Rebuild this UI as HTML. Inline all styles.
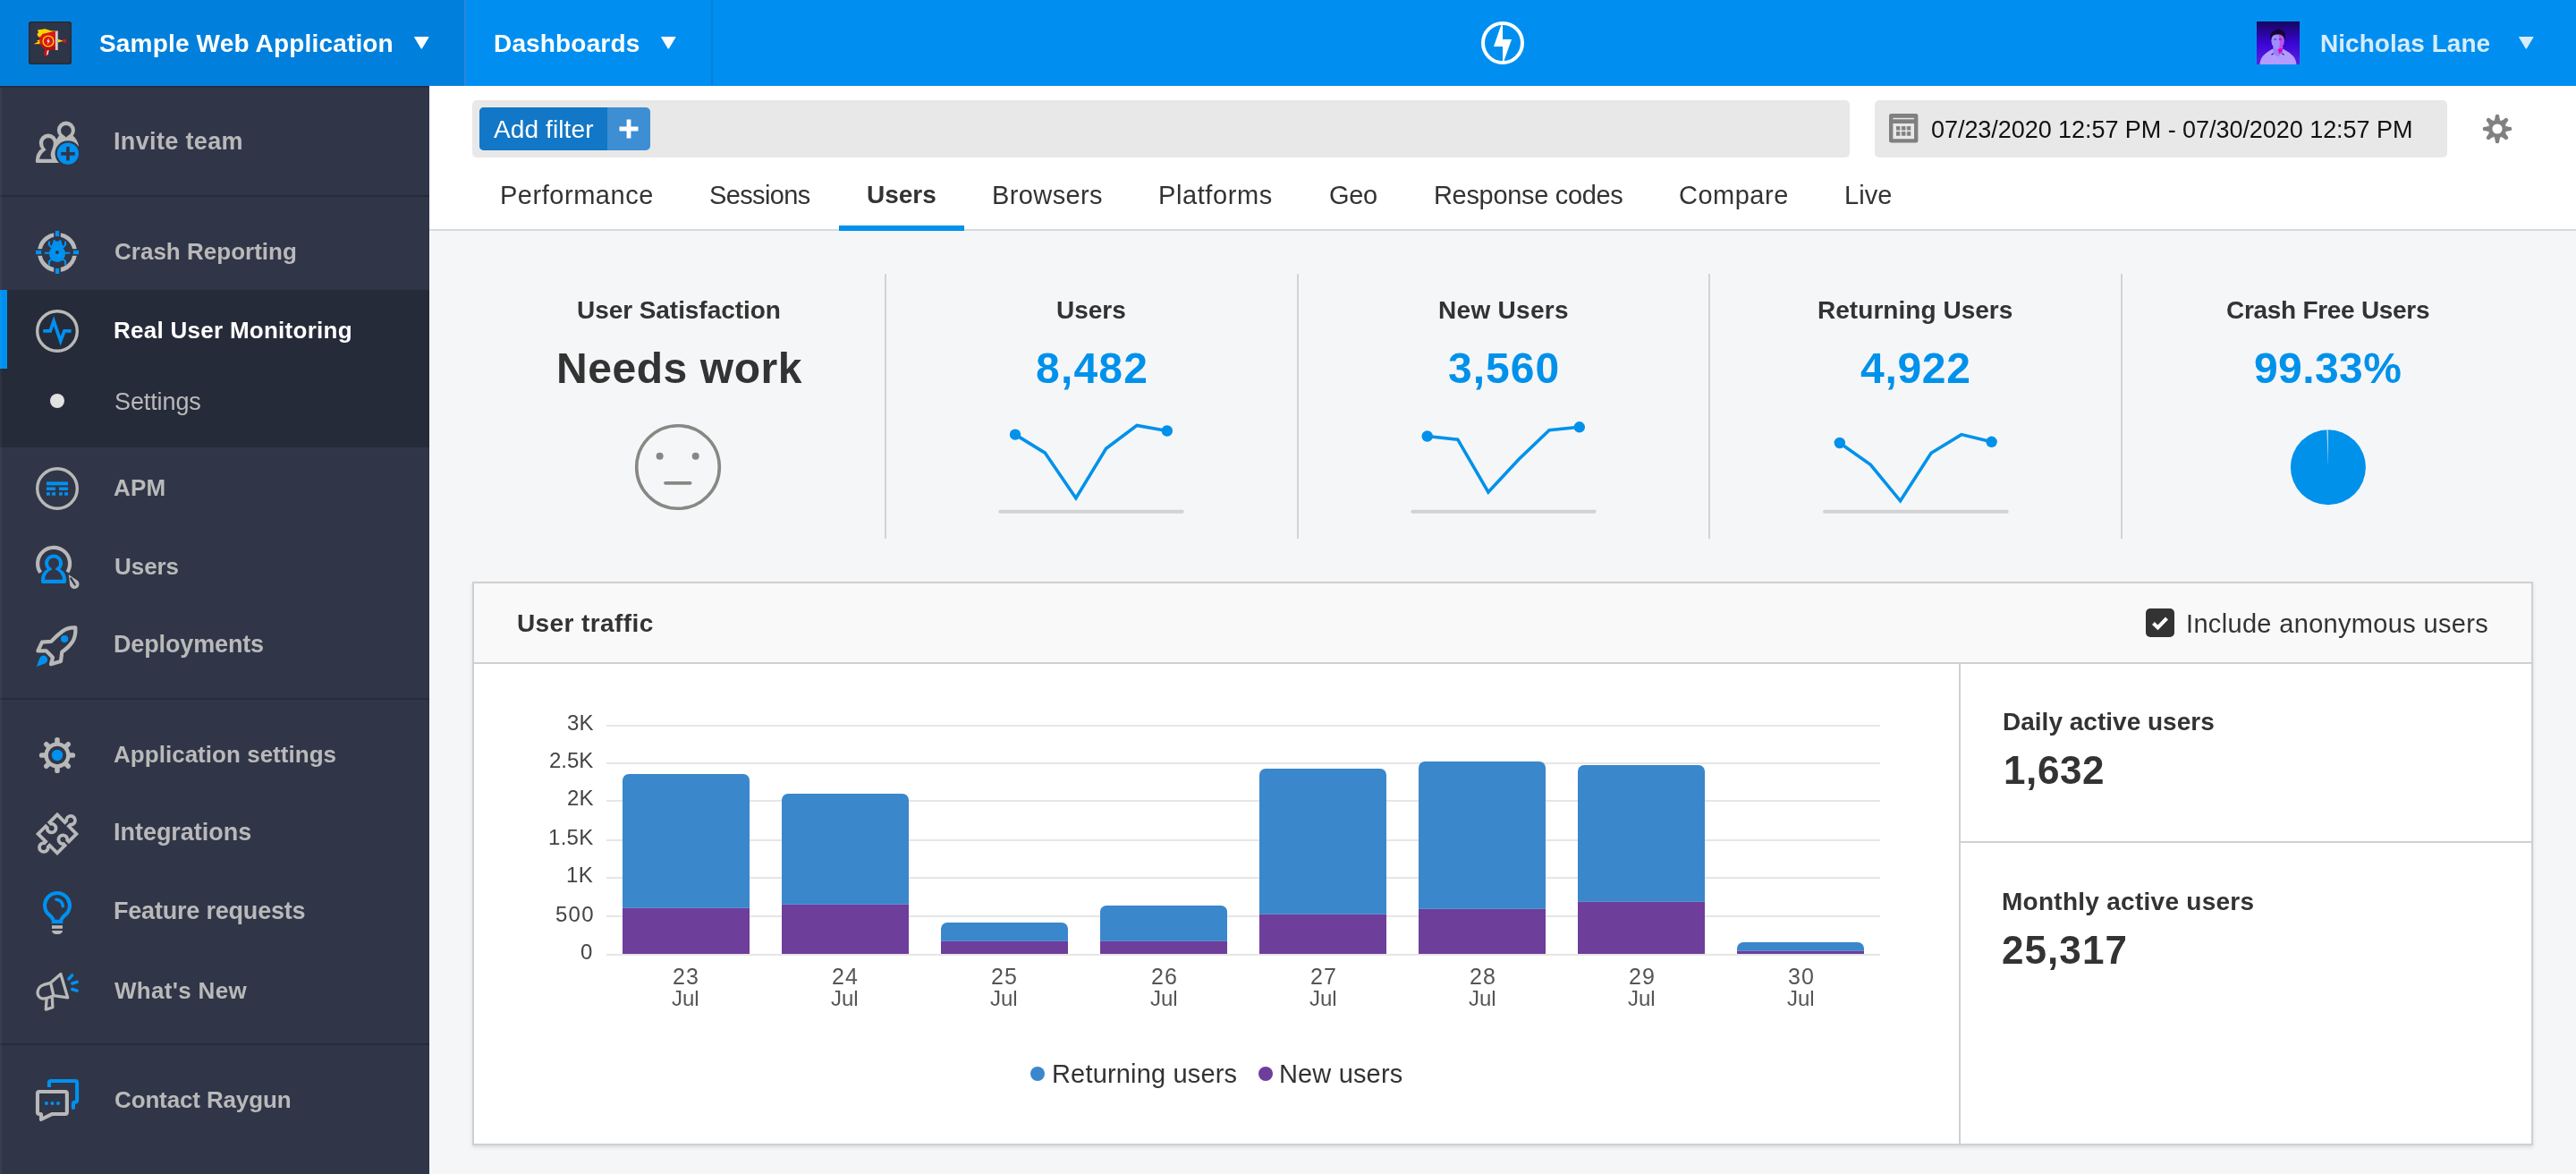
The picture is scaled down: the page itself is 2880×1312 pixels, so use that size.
<!DOCTYPE html>
<html><head><meta charset="utf-8"><title>Raygun - Users</title>
<style>
html,body{margin:0;padding:0}
body{width:2880px;height:1312px;position:relative;overflow:hidden;background:#f5f6f8;font-family:'Liberation Sans',sans-serif}
.t{position:absolute;white-space:nowrap;line-height:1;font-family:'Liberation Sans',sans-serif;will-change:transform}
.a{position:absolute}
svg{position:absolute;overflow:visible}
</style></head><body>
<!-- main white toolbar/tab area -->
<div class="a" style="left:480px;top:96px;width:2400px;height:160px;background:#fff"></div>
<div class="a" style="left:480px;top:256px;width:2400px;height:2px;background:#d9dadc"></div>
<!-- filter bar -->
<div class="a" style="left:528px;top:112px;width:1540px;height:64px;background:#e8e8e8;border-radius:5px"></div>
<div class="a" style="left:536px;top:120px;width:191px;height:48px;background:#3d8ed3;border-radius:5px;overflow:hidden"><div class="a" style="left:0;top:0;width:142.5px;height:48px;background:#1277c6"></div></div>
<svg style="left:692px;top:133px" width="22" height="22" viewBox="0 0 22 22"><path d="M11 .5v21M.5 11h21" stroke="#fff" stroke-width="4.8" fill="none"/></svg>
<!-- date box -->
<div class="a" style="left:2096px;top:112px;width:640px;height:64px;background:#e8e8e8;border-radius:5px"></div>
<!-- active tab underline -->
<div class="a" style="left:938px;top:252px;width:140px;height:6px;background:#0091ea"></div>
<!-- tile dividers -->
<div class="a" style="left:989px;top:306px;width:2px;height:296px;background:#d2d3d5"></div>
<div class="a" style="left:1450px;top:306px;width:2px;height:296px;background:#d2d3d5"></div>
<div class="a" style="left:1909.6px;top:306px;width:2px;height:296px;background:#d2d3d5"></div>
<div class="a" style="left:2371px;top:306px;width:2px;height:296px;background:#d2d3d5"></div>
<!-- panel -->
<div class="a" style="left:528px;top:650px;width:2304px;height:630px;box-sizing:border-box;border:2px solid #d0d0d0;background:#fff;box-shadow:0 2px 4px rgba(0,0,0,.12)"></div>
<div class="a" style="left:530px;top:652px;width:2300px;height:88px;background:#f9f9f9"></div>
<div class="a" style="left:530px;top:740px;width:2300px;height:2px;background:#d0d0d0"></div>
<div class="a" style="left:2190px;top:742px;width:2px;height:536px;background:#d0d0d0"></div>
<div class="a" style="left:2192px;top:940px;width:638px;height:2px;background:#d0d0d0"></div>
<!-- checkbox -->
<div class="a" style="left:2398.5px;top:680px;width:32px;height:32px;background:#333;border-radius:5px"></div>
<svg style="left:2398.5px;top:680px" width="32" height="32" viewBox="0 0 32 32"><path d="M8.5 16.5l5 5 10-10.5" stroke="#fff" stroke-width="4" fill="none"/></svg>
<!-- legend dots -->
<div class="a" style="left:1151.8px;top:1192.4px;width:16px;height:16px;border-radius:50%;background:#3a87cb"></div>
<div class="a" style="left:1406.8px;top:1192.4px;width:16px;height:16px;border-radius:50%;background:#6e3e9b"></div>

<div style="position:absolute;left:677.8px;top:809.7px;width:1424.2px;height:2px;background:#e6e6e6"></div>
<div style="position:absolute;left:677.8px;top:851.7px;width:1424.2px;height:2px;background:#e6e6e6"></div>
<div style="position:absolute;left:677.8px;top:893.9px;width:1424.2px;height:2px;background:#e6e6e6"></div>
<div style="position:absolute;left:677.8px;top:937.6px;width:1424.2px;height:2px;background:#e6e6e6"></div>
<div style="position:absolute;left:677.8px;top:979.6px;width:1424.2px;height:2px;background:#e6e6e6"></div>
<div style="position:absolute;left:677.8px;top:1023.2px;width:1424.2px;height:2px;background:#e6e6e6"></div>
<div style="position:absolute;left:677.8px;top:1065.6px;width:1424.2px;height:2px;background:#e6e6e6"></div>
<div style="position:absolute;left:695.7px;top:865.4px;width:142.2px;height:200.4px;background:#3a87cb;border-radius:7px 7px 0 0;overflow:hidden"><div style="position:absolute;left:0;right:0;top:149.0px;bottom:0;background:#6e3e9b;border-top:1px solid #5f8fd0"></div></div>
<div style="position:absolute;left:873.8px;top:887.0px;width:142.2px;height:178.8px;background:#3a87cb;border-radius:7px 7px 0 0;overflow:hidden"><div style="position:absolute;left:0;right:0;top:122.6px;bottom:0;background:#6e3e9b;border-top:1px solid #5f8fd0"></div></div>
<div style="position:absolute;left:1051.8px;top:1031.0px;width:142.2px;height:34.8px;background:#3a87cb;border-radius:7px 7px 0 0;overflow:hidden"><div style="position:absolute;left:0;right:0;top:20.4px;bottom:0;background:#6e3e9b;border-top:1px solid #5f8fd0"></div></div>
<div style="position:absolute;left:1229.9px;top:1012.1px;width:142.2px;height:53.7px;background:#3a87cb;border-radius:7px 7px 0 0;overflow:hidden"><div style="position:absolute;left:0;right:0;top:38.5px;bottom:0;background:#6e3e9b;border-top:1px solid #5f8fd0"></div></div>
<div style="position:absolute;left:1407.9px;top:858.9px;width:142.2px;height:206.9px;background:#3a87cb;border-radius:7px 7px 0 0;overflow:hidden"><div style="position:absolute;left:0;right:0;top:161.8px;bottom:0;background:#6e3e9b;border-top:1px solid #5f8fd0"></div></div>
<div style="position:absolute;left:1586.0px;top:851.2px;width:142.2px;height:214.6px;background:#3a87cb;border-radius:7px 7px 0 0;overflow:hidden"><div style="position:absolute;left:0;right:0;top:164.3px;bottom:0;background:#6e3e9b;border-top:1px solid #5f8fd0"></div></div>
<div style="position:absolute;left:1764.0px;top:854.9px;width:142.2px;height:210.9px;background:#3a87cb;border-radius:7px 7px 0 0;overflow:hidden"><div style="position:absolute;left:0;right:0;top:152.6px;bottom:0;background:#6e3e9b;border-top:1px solid #5f8fd0"></div></div>
<div style="position:absolute;left:1942.1px;top:1053.1px;width:142.2px;height:12.7px;background:#3a87cb;border-radius:7px 7px 0 0;overflow:hidden"><div style="position:absolute;left:0;right:0;top:8.9px;bottom:0;background:#6e3e9b;border-top:1px solid #5f8fd0"></div></div>
<div class="a" style="left:0;top:96px;width:480px;height:1216px;background:#303648"></div>
<div class="a" style="left:0;top:96px;width:480px;height:3px;background:linear-gradient(#232838,#303648)"></div>
<div class="a" style="left:0;top:324px;width:480px;height:176px;background:#262b3a"></div>
<div class="a" style="left:0;top:324px;width:8px;height:88px;background:#0091f0"></div>
<div class="a" style="left:0;top:218px;width:480px;height:2px;background:#272c3b"></div>
<div class="a" style="left:0;top:780px;width:480px;height:2px;background:#272c3b"></div>
<div class="a" style="left:0;top:1166px;width:480px;height:2px;background:#272c3b"></div>
<div class="a" style="left:56px;top:440px;width:16px;height:16px;border-radius:50%;background:#e2e2e2"></div>
<div class="a" style="left:0;top:98px;width:1.5px;height:1214px;background:rgba(255,255,255,.04)"></div>

<div class="a" style="left:0;top:0;width:2880px;height:96px;background:#008ff0"></div>
<div class="a" style="left:0;top:0;width:520px;height:96px;background:#0080dc"></div>
<div class="a" style="left:519px;top:0;width:1.5px;height:96px;background:#2f86dc"></div>
<div class="a" style="left:795px;top:0;width:1.5px;height:96px;background:#0a80d8"></div>
<!-- dropdown arrows -->
<svg style="left:463.3px;top:41.3px" width="16.6" height="14" viewBox="0 0 16.6 14"><path d="M.6 0h15.4q.9 0 .4.8l-7.5 12.4q-.6.8-1.200 0L.2 .8q-.5-.8.4-.8z" fill="#fff"/></svg>
<svg style="left:739px;top:41.3px" width="16.6" height="14" viewBox="0 0 16.6 14"><path d="M.6 0h15.4q.9 0 .4.8l-7.5 12.4q-.6.8-1.200 0L.2 .8q-.5-.8.4-.8z" fill="#fff"/></svg>
<svg style="left:2815.6px;top:41.3px" width="16.6" height="14" viewBox="0 0 16.6 14"><path d="M.6 0h15.4q.9 0 .4.8l-7.5 12.4q-.6.8-1.200 0L.2 .8q-.5-.8.4-.8z" fill="#d6ecfc"/></svg>

<svg style="left:32px;top:24px" width="48" height="48" viewBox="0 0 48 48"><rect x="0" y="0" width="48" height="48" rx="3" fill="#2e3546"/><rect x=".75" y=".75" width="46.5" height="46.5" rx="2.5" fill="none" stroke="#262b39" stroke-width="1.5"/>
<path d="M10 9.5L18.4 8.2 25.5 10.5 30 10.6V14L16.5 17 11.2 17.5 9.3 14.2 11 12.5z" fill="#ffd500"/>
<path d="M5.5 25.2L11 22.6 9 21.5 15.5 19.5 16 25z" fill="#ffd500"/>
<path d="M12 18.5L15.5 14 30 10.6V31.7L20.6 32.2 15.5 29 12.5 25z" fill="#d9181c"/>
<path d="M13 25L30 28V31.7L20.6 32.2 15.5 29z" fill="#b30f12"/>
<path d="M18.2 31L16.8 37.5 19.8 39.6 21.8 36.5 22.6 32z" fill="#c41216"/>
<path d="M20.8 32.5L20 38 21.8 36.5 22.6 32z" fill="#f0e6e6"/>
<rect x="30" y="10.6" width="2.9" height="21.4" fill="#d8d8dc"/><rect x="31.6" y="10.6" width="1.3" height="21.4" fill="#a9a9b2"/>
<path d="M32.9 19.8L39 21.8 32.9 23.6z" fill="#ffd500"/><circle cx="40.1" cy="21.7" r="2" fill="#d9181c"/>
<circle cx="22" cy="22" r="5.9" fill="#d9181c" stroke="#ffd000" stroke-width="1.4"/>
<path d="M22.8 18.2L20.3 22.6H21.9L21 26L23.8 21.4H22.1z" fill="#fff"/></svg>
<svg style="left:1656px;top:24px" width="48" height="48" viewBox="0 0 48 48"><circle cx="24" cy="24" r="22" fill="none" stroke="#fff" stroke-width="4"/>
<path d="M22.2 4.2H24V28.1H14z" fill="#fff"/><path d="M24 20.1H34L25.5 44H24z" fill="#fff"/></svg>
<svg style="left:2523px;top:24px" width="48" height="48" viewBox="0 0 48 48"><defs><linearGradient id="avg" x1="0" y1="0" x2="0" y2="1"><stop offset="0" stop-color="#16075e"/><stop offset=".5" stop-color="#3a04d2"/><stop offset="1" stop-color="#5a22e2"/></linearGradient><clipPath id="avc"><rect width="48" height="48"/></clipPath></defs>
<rect width="48" height="48" fill="url(#avg)"/><g clip-path="url(#avc)">
<path d="M3.5 48C4 40 8 36.5 17 31L30 31C40 36.5 43.5 40 44.5 48z" fill="#b49bff"/>
<path d="M18 29H29.5L28 36 23.5 39.5 19 36z" fill="#9a80f5"/>
<path d="M23.5 30L29 30 28.5 34 25 36z" fill="#e000c0"/>
<ellipse cx="23.6" cy="21.5" rx="7.2" ry="9.6" fill="#9f8cff"/>
<path d="M24 14C27 14 30 16 30.6 22 30.5 27 28 30.5 24.5 31 26.5 27 26 20 24 14z" fill="#d428d8" opacity=".6"/><ellipse cx="20.7" cy="20" rx="1.5" ry="1" fill="#2a1a80" opacity=".55"/><ellipse cx="26.2" cy="20" rx="1.5" ry="1" fill="#2a1a80" opacity=".55"/><path d="M16.5 37.2L19 35.6M30.6 37.2L28.2 35.6" stroke="#1a0a70" stroke-width="1.1"/>
<path d="M15.2 21C14 15 16.5 11 20.5 10.5 22 7.5 26 7.5 28 10 31.5 10.5 33 15 31.2 21 30.5 16.5 28 14.2 23.5 14.5 19 14.2 16.5 16.5 15.2 21z" fill="#15062f"/>
</g></svg>
<svg style="left:40px;top:136px" width="48" height="48" viewBox="0 0 48 48"><g fill="#b8b8b8"><circle cx="33.9" cy="9.6" r="10"/><path d="M26 15.5C22 21 17.5 30 18 46.1H36V35.6H48V27C47 22 45 18.5 41.2 15.2z"/>
<circle cx="13.9" cy="23.7" r="10.1"/><path d="M6.8 30C2 33 -.1 38 -.1 44.6Q-.1 46.1 1.4 46.1H25V28z"/></g>
<g fill="#303648"><circle cx="33.9" cy="9.9" r="5.9"/><path d="M28.6 12.4L33.9 17.4 39.2 12.4z"/>
<path d="M19.8 24.1C19.8 16.2 8.2 16.6 8.2 24.1 8.2 27.5 9.6 29.6 11.6 31.3 10.6 32.6 7.2 34.6 5.75 37.4 4.6 39.4 4 41.8 4 41.8H17.8C16.4 38.5 16.4 35.5 17.5 32.8 18.4 30 19.8 27.5 19.8 24.1z"/>
<circle cx="35.9" cy="35.6" r="14.4"/></g>
<circle cx="35.9" cy="35.6" r="12.1" fill="#0091f0"/><path d="M35.95 28.1v15.5M28.2 35.85h15.6" stroke="#303648" stroke-width="3.6" fill="none"/></svg>
<svg style="left:40px;top:258px" width="48" height="48" viewBox="0 0 48 48"><circle cx="24" cy="24" r="19.8" fill="none" stroke="#b8b8b8" stroke-width="4.6"/><g transform="rotate(0 24 24)"><rect x="20.2" y="0" width="7.6" height="8" fill="#303648"/><rect x="21.85" y="0" width="4.3" height="6.1" fill="#0091f0"/></g><g transform="rotate(90 24 24)"><rect x="20.2" y="0" width="7.6" height="8" fill="#303648"/><rect x="21.85" y="0" width="4.3" height="6.1" fill="#0091f0"/></g><g transform="rotate(180 24 24)"><rect x="20.2" y="0" width="7.6" height="8" fill="#303648"/><rect x="21.85" y="0" width="4.3" height="6.1" fill="#0091f0"/></g><g transform="rotate(270 24 24)"><rect x="20.2" y="0" width="7.6" height="8" fill="#303648"/><rect x="21.85" y="0" width="4.3" height="6.1" fill="#0091f0"/></g><g fill="#0091f0"><ellipse cx="24" cy="25.6" rx="9.1" ry="9.4"/><ellipse cx="24" cy="17.6" rx="6.4" ry="6.2"/><rect x="19.3" y="10.2" width="3" height="4" rx="1.2"/><rect x="25.7" y="10.2" width="3" height="4" rx="1.2"/></g>
<g stroke="#0091f0" stroke-width="2.1" fill="none" stroke-linecap="round" stroke-linejoin="round"><path d="M17.4 18.2L14.95 15.6V12.6M30.6 18.2L33.05 15.6V12.6M16 24.7H10.6M32 24.7H37.4M17.4 31.6L14.95 34.3V37.4M30.6 31.6L33.05 34.3V37.4"/></g>
<circle cx="23.9" cy="23.9" r="2" fill="#303648"/></svg>
<svg style="left:40px;top:346px" width="48" height="48" viewBox="0 0 48 48"><circle cx="24" cy="24" r="22.3" fill="none" stroke="#b8b8b8" stroke-width="3.4"/><path d="M8.3 23.9H16.2L20.1 12.6 27.7 35 32 23.9H39.6" fill="none" stroke="#0091f0" stroke-width="3.7" stroke-linejoin="miter"/></svg>
<svg style="left:40px;top:522px" width="48" height="48" viewBox="0 0 48 48"><circle cx="24" cy="24" r="22.3" fill="none" stroke="#b8b8b8" stroke-width="3.4"/><g fill="#0091f0"><rect x="12" y="16.4" width="24" height="3.9"/><rect x="12" y="22.5" width="10" height="3.4"/><rect x="26" y="22.5" width="10" height="3.4"/><rect x="12" y="28.2" width="3.9" height="3.5"/><rect x="18.1" y="28.2" width="3.9" height="3.5"/><rect x="26" y="28.2" width="3.9" height="3.5"/><rect x="32.1" y="28.2" width="3.9" height="3.5"/></g></svg>
<svg style="left:40px;top:610px" width="48" height="48" viewBox="0 0 48 48"><path d="M5.2 29.9A18 18 0 1 1 35.4 29.3" fill="none" stroke="#b8b8b8" stroke-width="4.2"/>
<path d="M36.8 32.2L46.2 38.5A5.2 5.2 0 1 1 38.1 43.4z" fill="#b8b8b8"/><path d="M39.2 36.4L43.8 43.3" stroke="#303648" stroke-width="2.3" stroke-linecap="round"/>
<g fill="#0091f0"><circle cx="20.05" cy="19.5" r="10.05"/><path d="M11.9 26.5C8 29 6 33 6 38V40Q6 42 8 42H32.1Q34.1 42 34.1 40V38C34.1 33 32 29 28.2 26.5z"/></g>
<g fill="#303648"><circle cx="20.05" cy="19.5" r="6"/><path d="M17.6 24.5L18 26.7C13 28.5 10.1 33 10.1 37.8H29.9C29.9 33 27 28.5 22.1 26.7L22.5 24.5z"/></g></svg>
<svg style="left:40px;top:698px" width="48" height="48" viewBox="0 0 48 48"><path d="M44.3 3.45Q36 3 29.8 7.5 23 12.5 17.25 18.8L7 19.55 2.4 29.3H11.6L19 36.7 17 44.3 28 41 29.3 30.5Q37 25.5 41.5 18.5 45 11.5 44.3 3.45z" fill="none" stroke="#b8b8b8" stroke-width="4.2" stroke-linejoin="round"/>
<circle cx="32.1" cy="16" r="4.1" fill="#0091f0"/><path d="M.9 47.1L4.28 37.66A4.6 4.6 0 1 1 10.26 43.49z" fill="#0091f0"/></svg>
<svg style="left:40px;top:820px" width="48" height="48" viewBox="0 0 48 48"><rect x="21.2" y="3.9" width="5.6" height="9" rx="2.6" fill="#b8b8b8" transform="rotate(0 24 24)"/><rect x="21.2" y="3.9" width="5.6" height="9" rx="2.6" fill="#b8b8b8" transform="rotate(45 24 24)"/><rect x="21.2" y="3.9" width="5.6" height="9" rx="2.6" fill="#b8b8b8" transform="rotate(90 24 24)"/><rect x="21.2" y="3.9" width="5.6" height="9" rx="2.6" fill="#b8b8b8" transform="rotate(135 24 24)"/><rect x="21.2" y="3.9" width="5.6" height="9" rx="2.6" fill="#b8b8b8" transform="rotate(180 24 24)"/><rect x="21.2" y="3.9" width="5.6" height="9" rx="2.6" fill="#b8b8b8" transform="rotate(225 24 24)"/><rect x="21.2" y="3.9" width="5.6" height="9" rx="2.6" fill="#b8b8b8" transform="rotate(270 24 24)"/><rect x="21.2" y="3.9" width="5.6" height="9" rx="2.6" fill="#b8b8b8" transform="rotate(315 24 24)"/><circle cx="24" cy="24" r="12.4" fill="none" stroke="#b8b8b8" stroke-width="4.4"/><circle cx="24" cy="24" r="6.2" fill="#0091f0"/></svg>
<svg style="left:40px;top:908px" width="48" height="48" viewBox="0 0 48 48"><g transform="translate(24 23.9) rotate(45)"><path d="M-15.17 -15.17L-3.00 -15.17L-3.00 -17.50A4.9 4.9 0 1 1 3.00 -17.50L3.00 -15.17L15.17 -15.17L15.17 -3.00L12.84 -3.00A4.9 4.9 0 1 0 12.84 3.00L15.17 3.00L15.17 15.17L3.00 15.17L3.00 17.50A4.9 4.9 0 1 1 -3.00 17.50L-3.00 15.17L-15.17 15.17L-15.17 3.00L-12.84 3.00A4.9 4.9 0 1 0 -12.84 -3.00L-15.17 -3.00Z" fill="none" stroke="#b8b8b8" stroke-width="3.75" stroke-linejoin="miter"/></g></svg>
<svg style="left:40px;top:996px" width="48" height="48" viewBox="0 0 48 48"><path d="M19.8 33.85C19.8 29 15.5 27.5 12.57 23.9A13.95 13.95 0 1 1 35.43 23.9C32.5 27.5 28.2 29 28.2 33.85z" fill="none" stroke="#0091f0" stroke-width="4.1" stroke-linejoin="miter"/>
<path d="M22.9 9.3A7.4 7.4 0 0 1 30.3 16.7" fill="none" stroke="#0091f0" stroke-width="3.6" stroke-linecap="round"/>
<g fill="#b8b8b8"><rect x="18" y="38.2" width="12" height="3.6"/><path d="M18 44.1H30C30 46.4 28 47.9 26 47.9H22C20 47.9 18 46.4 18 44.1z"/></g></svg>
<svg style="left:40px;top:1084px" width="48" height="48" viewBox="0 0 48 48"><g fill="none" stroke="#b8b8b8" stroke-width="3.3" stroke-linejoin="round"><path d="M16.6 14.3L27.9 4.6 35.7 30.9 19.9 28.7z"/>
<path d="M16.6 14.3L8.5 16.7C1.5 19 .2 27.6 4.8 31 7.6 33 10.4 32.4 19.9 28.7"/><path d="M12.1 32.5L11.3 44.2 18.9 41.7 18.3 30.6"/></g>
<g stroke="#0091f0" stroke-width="3.5" stroke-linecap="round"><path d="M36.9 10L40.6 5.8M40.8 15L46.1 13.4M40.8 21.5L46.1 23.1"/></g></svg>
<svg style="left:40px;top:1205px" width="48" height="48" viewBox="0 0 48 48"><path d="M14.95 10.1V5Q14.95 2.95 17 2.95H44Q46.1 2.95 46.1 5V24.6Q46.1 26.7 44 26.7H43.7Q41.9 26.7 41.9 28.5V32.9" fill="none" stroke="#0091f0" stroke-width="4.1" stroke-linejoin="round"/><circle cx="41.9" cy="32.9" r="2.05" fill="#0091f0"/>
<path d="M1.95 17Q1.95 14.95 4 14.95H32.8Q34.85 14.95 34.85 17V37.9Q34.85 39.95 32.8 39.95H18.5L6 46V40.6Q6 39.95 5.2 39.95H4Q1.95 39.95 1.95 37.9z" fill="none" stroke="#b8b8b8" stroke-width="4.1" stroke-linejoin="round"/>
<circle cx="11.9" cy="28" r="2.05" fill="#0091f0"/><circle cx="18.45" cy="28" r="2.05" fill="#0091f0"/><circle cx="25" cy="28" r="2.05" fill="#0091f0"/></svg>
<svg style="left:2111.8px;top:127.2px" width="33" height="33" viewBox="0 0 33 33"><rect x="0" y="0" width="32.4" height="32.6" rx="2.5" fill="#808080"/><rect x="4.4" y="4.8" width="23.6" height="1.5" fill="#e8e8e8"/><rect x="4.4" y="11" width="23.6" height="17.2" fill="#e8e8e8"/>
<rect x="8" y="14.2" width="16.2" height="4.3" fill="#cfcfcf"/><rect x="8" y="20.2" width="16.2" height="4.4" fill="#cfcfcf"/>
<g fill="#808080"><rect x="8" y="14.1" width="4" height="4.4"/><rect x="14.2" y="14.1" width="4" height="4.4"/><rect x="20.2" y="14.1" width="4" height="4.4"/><rect x="8" y="20.1" width="4" height="4.6"/><rect x="14.2" y="20.1" width="4" height="4.6"/><rect x="20.2" y="20.1" width="4" height="4.6"/></g></svg>
<svg style="left:2792px;top:143.7px" width="1" height="1" viewBox="0 0 1 1"><g><path d="M-3.6 -9.3C-2.6 -11 -2.4 -12.5 -2.3 -14A2.3 2.3 0 0 1 2.3 -14C2.4 -12.5 2.6 -11 3.6 -9.3z" fill="#808080" transform="rotate(0)"/><path d="M-3.6 -9.3C-2.6 -11 -2.4 -12.5 -2.3 -14A2.3 2.3 0 0 1 2.3 -14C2.4 -12.5 2.6 -11 3.6 -9.3z" fill="#808080" transform="rotate(45)"/><path d="M-3.6 -9.3C-2.6 -11 -2.4 -12.5 -2.3 -14A2.3 2.3 0 0 1 2.3 -14C2.4 -12.5 2.6 -11 3.6 -9.3z" fill="#808080" transform="rotate(90)"/><path d="M-3.6 -9.3C-2.6 -11 -2.4 -12.5 -2.3 -14A2.3 2.3 0 0 1 2.3 -14C2.4 -12.5 2.6 -11 3.6 -9.3z" fill="#808080" transform="rotate(135)"/><path d="M-3.6 -9.3C-2.6 -11 -2.4 -12.5 -2.3 -14A2.3 2.3 0 0 1 2.3 -14C2.4 -12.5 2.6 -11 3.6 -9.3z" fill="#808080" transform="rotate(180)"/><path d="M-3.6 -9.3C-2.6 -11 -2.4 -12.5 -2.3 -14A2.3 2.3 0 0 1 2.3 -14C2.4 -12.5 2.6 -11 3.6 -9.3z" fill="#808080" transform="rotate(225)"/><path d="M-3.6 -9.3C-2.6 -11 -2.4 -12.5 -2.3 -14A2.3 2.3 0 0 1 2.3 -14C2.4 -12.5 2.6 -11 3.6 -9.3z" fill="#808080" transform="rotate(270)"/><path d="M-3.6 -9.3C-2.6 -11 -2.4 -12.5 -2.3 -14A2.3 2.3 0 0 1 2.3 -14C2.4 -12.5 2.6 -11 3.6 -9.3z" fill="#808080" transform="rotate(315)"/><circle r="7.8" fill="none" stroke="#808080" stroke-width="4.4"/></g></svg>
<svg style="left:708px;top:472px" width="100" height="100" viewBox="0 0 100 100"><circle cx="50" cy="50" r="46.3" fill="none" stroke="#888784" stroke-width="3.6"/><circle cx="29.6" cy="37.7" r="4" fill="#888784"/><circle cx="69.7" cy="37.7" r="4" fill="#888784"/><path d="M36 67.8H63.6" stroke="#888784" stroke-width="3.8" stroke-linecap="round"/></svg>
<svg style="left:0;top:0" width="2880" height="1312" viewBox="0 0 2880 1312"><path d="M1118.3 571.8H1321.6" stroke="#d2d2d2" stroke-width="4" stroke-linecap="round"/><polyline points="1135.0,485.6 1168.4,506.2 1202.9,556.8 1236.6,501.3 1271.0,475.5 1304.8,481.5" fill="none" stroke="#0091ea" stroke-width="3.6" stroke-linejoin="miter"/><circle cx="1135.0" cy="485.6" r="6.2" fill="#0091ea"/><circle cx="1304.8" cy="481.5" r="6.2" fill="#0091ea"/><path d="M1579.3 571.8H1782.6" stroke="#d2d2d2" stroke-width="4" stroke-linecap="round"/><polyline points="1595.7,487.5 1629.8,491.2 1663.9,550.0 1697.6,513.7 1732.1,480.7 1765.8,477.3" fill="none" stroke="#0091ea" stroke-width="3.6" stroke-linejoin="miter"/><circle cx="1595.7" cy="487.5" r="6.2" fill="#0091ea"/><circle cx="1765.8" cy="477.3" r="6.2" fill="#0091ea"/><path d="M2040 571.8H2243.7" stroke="#d2d2d2" stroke-width="4" stroke-linecap="round"/><polyline points="2056.8,495.0 2091.3,519.3 2124.6,559.8 2159.1,506.2 2192.9,485.6 2226.6,493.8" fill="none" stroke="#0091ea" stroke-width="3.6" stroke-linejoin="miter"/><circle cx="2056.8" cy="495.0" r="6.2" fill="#0091ea"/><circle cx="2226.6" cy="493.8" r="6.2" fill="#0091ea"/><circle cx="2602.9" cy="522.2" r="42" fill="#0091ea"/><path d="M2602.9 522.2L2601.4 480.2H2602.9z" fill="#bfe0f7"/></svg>
<div class="t" style="left:111.4px;top:35.3px;font-size:28px;font-weight:700;color:#fff;letter-spacing:0.17px;">Sample Web Application</div>
<div class="t" style="left:551.6px;top:35.3px;font-size:28px;font-weight:700;color:#fff;letter-spacing:0.16px;">Dashboards</div>
<div class="t" style="left:2593.8px;top:35.3px;font-size:28px;font-weight:700;color:#d6ecfc;letter-spacing:0.02px;">Nicholas Lane</div>
<div class="t" style="left:127.3px;top:145.1px;font-size:27px;font-weight:700;color:#b9b9b9;letter-spacing:0.35px;">Invite team</div>
<div class="t" style="left:127.6px;top:268.0px;font-size:26px;font-weight:700;color:#b9b9b9;letter-spacing:0.01px;">Crash Reporting</div>
<div class="t" style="left:127.3px;top:356.0px;font-size:26px;font-weight:700;color:#fff;letter-spacing:0.27px;">Real User Monitoring</div>
<div class="t" style="left:127.6px;top:435.7px;font-size:27px;font-weight:400;color:#b9b9b9;letter-spacing:-0.11px;">Settings</div>
<div class="t" style="left:127.2px;top:532.4px;font-size:26px;font-weight:700;color:#b9b9b9;letter-spacing:0.25px;">APM</div>
<div class="t" style="left:127.5px;top:620.0px;font-size:26px;font-weight:700;color:#b9b9b9;letter-spacing:-0.05px;">Users</div>
<div class="t" style="left:127.3px;top:707.1px;font-size:27px;font-weight:700;color:#b9b9b9;letter-spacing:-0.14px;">Deployments</div>
<div class="t" style="left:127.2px;top:830.0px;font-size:26px;font-weight:700;color:#b9b9b9;letter-spacing:0.03px;">Application settings</div>
<div class="t" style="left:127.3px;top:917.1px;font-size:27px;font-weight:700;color:#b9b9b9;letter-spacing:-0.03px;">Integrations</div>
<div class="t" style="left:127.3px;top:1005.1px;font-size:27px;font-weight:700;color:#b9b9b9;letter-spacing:-0.20px;">Feature requests</div>
<div class="t" style="left:128.4px;top:1094.0px;font-size:26px;font-weight:700;color:#b9b9b9;letter-spacing:0.31px;">What's New</div>
<div class="t" style="left:127.6px;top:1216.0px;font-size:26px;font-weight:700;color:#b9b9b9;letter-spacing:-0.14px;">Contact Raygun</div>
<div class="t" style="left:551.7px;top:130.8px;font-size:28px;font-weight:400;color:#fff;letter-spacing:0.11px;">Add filter</div>
<div class="t" style="left:2159.0px;top:132.0px;font-size:27px;font-weight:400;color:#111;letter-spacing:-0.05px;">07/23/2020 12:57 PM - 07/30/2020 12:57 PM</div>
<div class="t" style="left:558.7px;top:203.5px;font-size:29px;font-weight:400;color:#333;letter-spacing:0.53px;">Performance</div>
<div class="t" style="left:793.0px;top:203.5px;font-size:29px;font-weight:400;color:#333;letter-spacing:-0.64px;">Sessions</div>
<div class="t" style="left:968.5px;top:203.9px;font-size:28px;font-weight:700;color:#333;letter-spacing:0.00px;">Users</div>
<div class="t" style="left:1109.0px;top:203.5px;font-size:29px;font-weight:400;color:#333;letter-spacing:0.39px;">Browsers</div>
<div class="t" style="left:1295.3px;top:203.5px;font-size:29px;font-weight:400;color:#333;letter-spacing:0.59px;">Platforms</div>
<div class="t" style="left:1485.7px;top:203.5px;font-size:29px;font-weight:400;color:#333;letter-spacing:-0.35px;">Geo</div>
<div class="t" style="left:1602.6px;top:203.5px;font-size:29px;font-weight:400;color:#333;letter-spacing:-0.32px;">Response codes</div>
<div class="t" style="left:1877.0px;top:203.5px;font-size:29px;font-weight:400;color:#333;letter-spacing:0.50px;">Compare</div>
<div class="t" style="left:2061.5px;top:203.5px;font-size:29px;font-weight:400;color:#333;letter-spacing:0.10px;">Live</div>
<div class="t" style="left:645.4px;top:333.3px;font-size:28px;font-weight:700;color:#333;letter-spacing:-0.06px;">User Satisfaction</div>
<div class="t" style="left:1181.0px;top:333.3px;font-size:28px;font-weight:700;color:#333;letter-spacing:0.00px;">Users</div>
<div class="t" style="left:1607.6px;top:333.3px;font-size:28px;font-weight:700;color:#333;letter-spacing:0.30px;">New Users</div>
<div class="t" style="left:2032.3px;top:333.3px;font-size:28px;font-weight:700;color:#333;letter-spacing:0.04px;">Returning Users</div>
<div class="t" style="left:2488.7px;top:333.3px;font-size:28px;font-weight:700;color:#333;letter-spacing:-0.29px;">Crash Free Users</div>
<div class="t" style="left:622.0px;top:387.8px;font-size:48px;font-weight:700;color:#333;letter-spacing:0.56px;">Needs work</div>
<div class="t" style="left:1157.8px;top:387.8px;font-size:48px;font-weight:700;color:#0091ea;letter-spacing:1.18px;">8,482</div>
<div class="t" style="left:1618.7px;top:387.8px;font-size:48px;font-weight:700;color:#0091ea;letter-spacing:1.00px;">3,560</div>
<div class="t" style="left:2080.2px;top:387.8px;font-size:48px;font-weight:700;color:#0091ea;letter-spacing:0.70px;">4,922</div>
<div class="t" style="left:2519.6px;top:387.8px;font-size:48px;font-weight:700;color:#0091ea;letter-spacing:0.42px;">99.33%</div>
<div class="t" style="left:577.6px;top:683.2px;font-size:28px;font-weight:700;color:#333;letter-spacing:0.40px;">User traffic</div>
<div class="t" style="left:2444.0px;top:682.5px;font-size:29px;font-weight:400;color:#333;letter-spacing:0.33px;">Include anonymous users</div>
<div class="t" style="left:2238.8px;top:792.9px;font-size:28px;font-weight:700;color:#333;letter-spacing:0.01px;">Daily active users</div>
<div class="t" style="left:2239.5px;top:838.6px;font-size:44px;font-weight:700;color:#333;letter-spacing:0.62px;">1,632</div>
<div class="t" style="left:2238.4px;top:994.2px;font-size:28px;font-weight:700;color:#333;letter-spacing:0.27px;">Monthly active users</div>
<div class="t" style="left:2238.4px;top:1039.6px;font-size:44px;font-weight:700;color:#333;letter-spacing:1.06px;">25,317</div>
<div class="t" style="left:1175.6px;top:1185.9px;font-size:29px;font-weight:400;color:#333;letter-spacing:0.17px;">Returning users</div>
<div class="t" style="left:1429.7px;top:1185.9px;font-size:29px;font-weight:400;color:#333;letter-spacing:0.15px;">New users</div>
<div class="t" style="left:633.6px;top:796.0px;font-size:24px;font-weight:400;color:#444;letter-spacing:0.10px;">3K</div>
<div class="t" style="left:613.8px;top:838.0px;font-size:24px;font-weight:400;color:#444;letter-spacing:-0.03px;">2.5K</div>
<div class="t" style="left:633.6px;top:880.2px;font-size:24px;font-weight:400;color:#444;letter-spacing:0.10px;">2K</div>
<div class="t" style="left:612.8px;top:923.9px;font-size:24px;font-weight:400;color:#444;letter-spacing:0.30px;">1.5K</div>
<div class="t" style="left:633.2px;top:965.9px;font-size:24px;font-weight:400;color:#444;letter-spacing:0.50px;">1K</div>
<div class="t" style="left:621.2px;top:1009.5px;font-size:24px;font-weight:400;color:#444;letter-spacing:1.25px;">500</div>
<div class="t" style="left:648.6px;top:1051.9px;font-size:24px;font-weight:400;color:#444;letter-spacing:0.00px;">0</div>
<div class="t" style="left:752.3px;top:1078.8px;font-size:25px;font-weight:400;color:#555;letter-spacing:1.00px;">23</div>
<div class="t" style="left:751.3px;top:1103.9px;font-size:24px;font-weight:400;color:#555;letter-spacing:0.00px;">Jul</div>
<div class="t" style="left:930.4px;top:1078.8px;font-size:25px;font-weight:400;color:#555;letter-spacing:1.00px;">24</div>
<div class="t" style="left:929.4px;top:1103.9px;font-size:24px;font-weight:400;color:#555;letter-spacing:0.00px;">Jul</div>
<div class="t" style="left:1108.4px;top:1078.8px;font-size:25px;font-weight:400;color:#555;letter-spacing:1.00px;">25</div>
<div class="t" style="left:1107.4px;top:1103.9px;font-size:24px;font-weight:400;color:#555;letter-spacing:0.00px;">Jul</div>
<div class="t" style="left:1286.5px;top:1078.8px;font-size:25px;font-weight:400;color:#555;letter-spacing:1.00px;">26</div>
<div class="t" style="left:1285.5px;top:1103.9px;font-size:24px;font-weight:400;color:#555;letter-spacing:0.00px;">Jul</div>
<div class="t" style="left:1464.5px;top:1078.8px;font-size:25px;font-weight:400;color:#555;letter-spacing:1.00px;">27</div>
<div class="t" style="left:1463.5px;top:1103.9px;font-size:24px;font-weight:400;color:#555;letter-spacing:0.00px;">Jul</div>
<div class="t" style="left:1642.6px;top:1078.8px;font-size:25px;font-weight:400;color:#555;letter-spacing:1.00px;">28</div>
<div class="t" style="left:1641.6px;top:1103.9px;font-size:24px;font-weight:400;color:#555;letter-spacing:0.00px;">Jul</div>
<div class="t" style="left:1820.6px;top:1078.8px;font-size:25px;font-weight:400;color:#555;letter-spacing:1.00px;">29</div>
<div class="t" style="left:1819.6px;top:1103.9px;font-size:24px;font-weight:400;color:#555;letter-spacing:0.00px;">Jul</div>
<div class="t" style="left:1998.7px;top:1078.8px;font-size:25px;font-weight:400;color:#555;letter-spacing:1.00px;">30</div>
<div class="t" style="left:1997.7px;top:1103.9px;font-size:24px;font-weight:400;color:#555;letter-spacing:0.00px;">Jul</div>
</body></html>
